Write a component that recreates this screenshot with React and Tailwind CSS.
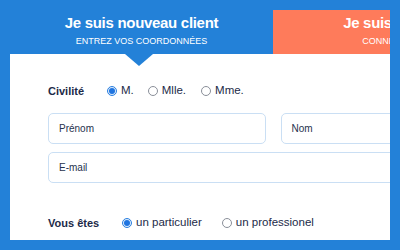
import React from "react";

const Radio = ({ checked, label, className = "" }) => (
  <label className={`flex items-center gap-[4px] ${className}`}>
    <span
      className={`w-[10px] h-[10px] rounded-full flex items-center justify-center border ${
        checked ? "border-[#2a7fe0] bg-[#dcebfb]" : "border-[#8a8f99] bg-white"
      }`}
    >
      {checked && <span className="w-[6px] h-[6px] rounded-full bg-[#1f74e0]" />}
    </span>
    <span className="text-[11.5px] text-[#1c2a48]">{label}</span>
  </label>
);

const Field = ({ placeholder, className = "" }) => (
  <div
    className={`h-[31px] rounded-[5px] border border-[#cadff4] bg-white flex items-center px-[10px] text-[10px] text-[#26324d] ${className}`}
  >
    {placeholder}
  </div>
);

export default function App() {
  return (
    <div
      className="w-[400px] h-[250px] bg-[#2381d8] pt-[10px] pl-[10px] overflow-hidden"
      style={{ fontFamily: '"Liberation Sans", Arial, sans-serif' }}
    >
      <div className="w-[380px] overflow-hidden">
        <div className="w-[526px]">
          {/* Tabs */}
          <div className="flex h-[44px]">
            <div className="relative w-[263px] flex flex-col items-center pt-[3px] text-white">
              <div className="text-[15px] leading-[20px] font-bold tracking-[-0.3px]">Je suis nouveau client</div>
              <div className="text-[9px] leading-[12px] mt-[2px]">ENTREZ VOS COORDONNÉES</div>
              <svg className="absolute left-[115px] top-[44px] z-10" width="28" height="12" viewBox="0 0 28 12">
                <polygon points="0,0 28,0 14,12" fill="#2381d8" />
              </svg>
            </div>
            <div className="w-[263px] bg-[#fe7b5b] flex flex-col items-center pt-[3px] text-white">
              <div className="text-[15px] leading-[20px] font-bold tracking-[-0.3px]">Je suis déjà client</div>
              <div className="text-[9px] leading-[12px] mt-[2px]">CONNECTEZ-VOUS</div>
            </div>
          </div>

          {/* Card */}
          <div className="bg-white h-[186px] pt-[30px] px-[38px]">
            <div className="flex items-center h-[14px]">
              <span className="w-[59px] text-[11px] font-bold text-[#1c2a48]">Civilité</span>
              <Radio checked label="M." />
              <Radio label="Mlle." className="ml-[14px]" />
              <Radio label="Mme." className="ml-[15px]" />
            </div>

            <div className="mt-[15px] flex flex-col gap-[8px]">
              <div className="flex gap-[15px]">
                <Field placeholder="Prénom" className="flex-1" />
                <Field placeholder="Nom" className="flex-1" />
              </div>
              <Field placeholder="E-mail" />
            </div>

            <div className="mt-[33px] flex items-center h-[14px]">
              <span className="w-[74px] text-[11px] font-bold text-[#1c2a48]">Vous êtes</span>
              <Radio checked label="un particulier" />
              <Radio label="un professionel" className="ml-[20px]" />
            </div>
          </div>
        </div>
      </div>
    </div>
  );
}
